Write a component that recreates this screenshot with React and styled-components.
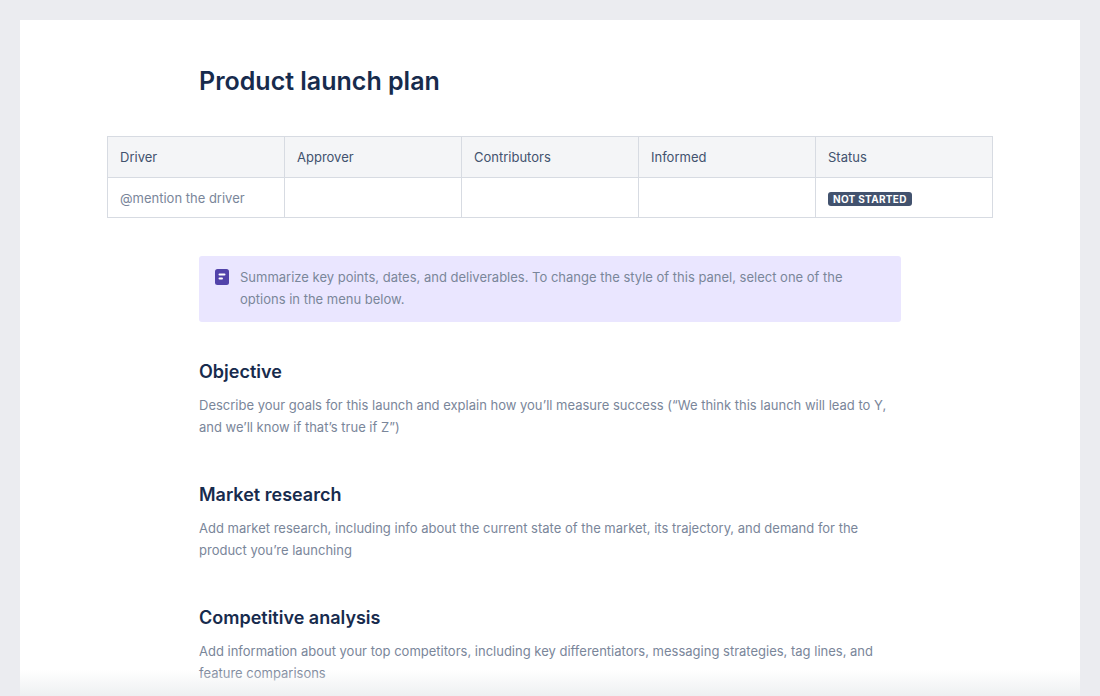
import styled, { createGlobalStyle } from 'styled-components';

const Global = createGlobalStyle`
  html, body { margin: 0; padding: 0; background: #ebecf0; }
  body { font-family: Inter, "Noto Sans", sans-serif; -webkit-font-smoothing: antialiased; }
`;

const Page = styled.div`
  height: 696px;
  padding: 20px 20px 0;
  box-sizing: border-box;
  overflow: hidden;
`;

const Sheet = styled.div`
  position: relative;
  background: #fff;
  height: 676px;
  overflow: hidden;
  display: flex;
  flex-direction: column;
  align-items: center;
  &::after {
    content: '';
    position: absolute;
    left: 0; right: 0; bottom: 0;
    height: 26px;
    background: linear-gradient(to bottom, rgba(255,255,255,0), #eef0f2);
  }
`;

const Column = styled.div`
  width: 702px;
`;

const Title = styled.h1`
  margin: 47px 0 0;
  font-size: 25px;
  font-weight: 600;
  color: #172b4d;
  line-height: 28px;
`;

const Table = styled.table`
  margin-top: 41px;
  width: 886px;
  border-collapse: collapse;
  table-layout: fixed;
  font-size: 13px;
`;

const Th = styled.th`
  background: #f4f5f7;
  border: 1px solid #d7dbe2;
  height: 40px;
  padding: 0 12px;
  text-align: left;
  font-weight: 400;
  color: #42526e;
`;

const Td = styled.td`
  border: 1px solid #d7dbe2;
  height: 39px;
  padding: 0 12px;
  color: ${p => (p.$muted ? '#7a869a' : '#172b4d')};
`;

const Lozenge = styled.span`
  display: inline-block;
  background: #42526e;
  color: #fff;
  font-size: 10px;
  font-weight: 700;
  letter-spacing: 0.3px;
  padding: 1px 5px;
  border-radius: 3px;
  line-height: 12px;
`;

const Panel = styled.div`
  margin-top: 38px;
  background: #eae6ff;
  border-radius: 3px;
  padding: 10px 20px 12px 16px;
  display: flex;
  gap: 11px;
  font-size: 13px;
  line-height: 22px;
  color: #7a869a;
`;

const Heading = styled.h2`
  margin: ${p => p.$first ? '38px' : '45px'} 0 10px;
  font-size: 18px;
  font-weight: 600;
  color: #172b4d;
  line-height: 24px;
`;

const Body = styled.p`
  margin: 0;
  font-size: 13px;
  line-height: 22px;
  color: #7a869a;
`;

const NoteIcon = () => (
  <svg width="14" height="16" viewBox="0 0 14 16" style={{ flex: 'none', marginTop: 3 }}>
    <rect x="0" y="0" width="14" height="16" rx="2.5" fill="#5243aa" />
    <rect x="3.5" y="4.5" width="7" height="2" rx="1" fill="#fff" />
    <rect x="3.5" y="8.5" width="4.5" height="2" rx="1" fill="#fff" />
  </svg>
);

const sections = [
  ['Objective', 'Describe your goals for this launch and explain how you\u2019ll measure success (\u201cWe think this launch will lead to Y, and we\u2019ll know if that\u2019s true if Z\u201d)'],
  ['Market research', 'Add market research, including info about the current state of the market, its trajectory, and demand for the product you\u2019re launching'],
  ['Competitive analysis', 'Add information about your top competitors, including key differentiators, messaging strategies, tag lines, and feature comparisons'],
];

export default function App() {
  return (
    <Page>
      <Global />
      <Sheet>
        <Column>
          <Title>Product launch plan</Title>
        </Column>
        <Table>
          <thead>
            <tr>
              {['Driver', 'Approver', 'Contributors', 'Informed', 'Status'].map(h => <Th key={h}>{h}</Th>)}
            </tr>
          </thead>
          <tbody>
            <tr>
              <Td $muted>@mention the driver</Td>
              <Td />
              <Td />
              <Td />
              <Td><Lozenge>NOT STARTED</Lozenge></Td>
            </tr>
          </tbody>
        </Table>
        <Column>
          <Panel>
            <NoteIcon />
            <div>Summarize key points, dates, and deliverables. To change the style of this panel, select one of the options in the menu below.</div>
          </Panel>
          {sections.map(([h, t], i) => (
            <div key={h}>
              <Heading $first={i === 0}>{h}</Heading>
              <Body>{t}</Body>
            </div>
          ))}
        </Column>
      </Sheet>
    </Page>
  );
}
